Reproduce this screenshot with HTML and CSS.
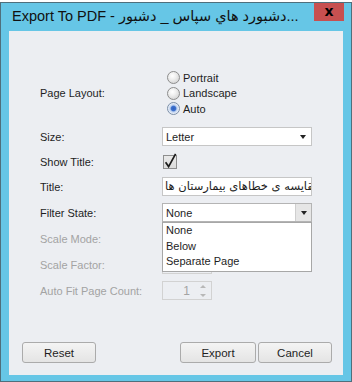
FILE: index.html
```html
<!DOCTYPE html>
<html lang="en">
<head>
    <meta charset="UTF-8">
    <meta name="viewport" content="width=device-width, initial-scale=1.0">
    <title>Export To PDF</title>
    <link rel="stylesheet" href="styles.css">
</head>
<body>
    <div class="window">
        <div class="titlebar">
            <span class="title">Export To PDF - دشبورد هاي سپاس _ دشبور...</span>
            <span class="close">x</span>
        </div>
        <div class="client">
            <div class="form">
                <div class="row row-radios">
                    <div class="label">Page Layout:</div>
                    <div class="radios">
                        <div class="radio"><span class="dot"></span>Portrait</div>
                        <div class="radio"><span class="dot"></span>Landscape</div>
                        <div class="radio"><span class="dot checked"></span>Auto</div>
                    </div>
                </div>
                <div class="row">
                    <div class="label">Size:</div>
                    <div class="combo">
                        <span class="combo-text">Letter</span>
                        <span class="arrow"></span>
                    </div>
                </div>
                <div class="row row-check">
                    <div class="label">Show Title:</div>
                    <span class="checkbox">
                        <svg width="14" height="14" viewBox="0 0 14 14"><path d="M2.6 7.2 L5.6 11.6 L12.6 -1.2" fill="none" stroke="#1b1b1b" stroke-width="1.7"/></svg>
                    </span>
                </div>
                <div class="row">
                    <div class="label">Title:</div>
                    <div class="textbox">مقایسه ی خطاهای بیمارستان ها</div>
                </div>
                <div class="row">
                    <div class="label">Filter State:</div>
                    <div class="combo combo-open">
                        <span class="combo-text">None</span>
                        <span class="dropbtn"><span class="arrow"></span></span>
                        <ul class="droplist">
                            <li>None</li>
                            <li>Below</li>
                            <li>Separate Page</li>
                        </ul>
                    </div>
                </div>
                <div class="row">
                    <div class="label disabled">Scale Mode:</div>
                    <div class="combo combo-disabled"></div>
                </div>
                <div class="row">
                    <div class="label disabled">Scale Factor:</div>
                    <div class="spin">
                        <span class="spin-value"></span>
                        <span class="spin-btns"><i class="up"></i><i class="down"></i></span>
                    </div>
                </div>
                <div class="row">
                    <div class="label disabled">Auto Fit Page Count:</div>
                    <div class="spin">
                        <span class="spin-value">1</span>
                        <span class="spin-btns"><i class="up"></i><i class="down"></i></span>
                    </div>
                </div>
            </div>
            <div class="buttons">
                <button class="btn">Reset</button>
                <button class="btn btn-export">Export</button>
                <button class="btn">Cancel</button>
            </div>
        </div>
    </div>
</body>
</html>
```
FILE: styles.css
```css
body {
    margin: 0;
    padding: 0;
    background-color: #ffffff;
    font-family: "Liberation Sans", "DejaVu Sans", sans-serif;
    font-size: 11px;
    color: #1e1e1e;
}
.window {
    margin-top: 2px;
    height: 380px;
    box-sizing: border-box;
    border: 1px solid #4f6f7c;
    background-color: #66c6e6;
    padding: 0 8px 6px 8px;
    display: flex;
    flex-direction: column;
}
.titlebar {
    height: 28px;
    display: flex;
    align-items: flex-start;
    margin-right: -1px;
}
.title {
    flex: 1;
    padding: 4px 0 0 3px;
    font-size: 14.5px;
    line-height: 18px;
    color: #111;
    white-space: nowrap;
    overflow: hidden;
}
.close {
    width: 30px;
    height: 18px;
    background-color: #c75050;
    color: #000;
    font-family: "DejaVu Sans", sans-serif;
    font-weight: bold;
    font-size: 14px;
    line-height: 16px;
    text-align: center;
}
.client {
    flex: 1;
    background-color: #eceef2;
    display: flex;
    flex-direction: column;
}
.form {
    padding: 39px 0 0 31px;
}
.row {
    display: flex;
    align-items: center;
    height: 19px;
    margin-bottom: 7px;
}
.row-radios {
    height: 46.5px;
    margin-bottom: 10.5px;
}
.row-check {
    height: 17px;
}
.label {
    width: 122px;
}
.disabled {
    color: #a3a3a3;
}
.radios {
    display: flex;
    flex-direction: column;
}
.radio {
    height: 15.5px;
    display: flex;
    align-items: center;
}
.dot {
    width: 11px;
    height: 11px;
    margin: 0 3px 0 5px;
    border: 1px solid #8d8d8d;
    border-radius: 50%;
    background: radial-gradient(circle at 40% 35%, #ffffff 0, #f0f0f0 35%, #c9c9c9 100%);
}
.dot.checked {
    border-color: #7b8ea8;
    background: radial-gradient(circle, #2f62c0 0, #3d70cc 2.2px, #bcd0ef 3.4px, #eef2f8 5.5px);
}
.combo {
    position: relative;
    width: 150px;
    height: 19px;
    box-sizing: border-box;
    border: 1px solid #c6c6c6;
    background-color: #fff;
    display: flex;
    align-items: center;
}
.combo-text {
    flex: 1;
    padding-left: 3px;
}
.arrow {
    width: 0;
    height: 0;
    margin-right: 5px;
    border-left: 3.5px solid transparent;
    border-right: 3.5px solid transparent;
    border-top: 4px solid #222;
}
.combo-open {
    border-color: #b4b4b4;
    z-index: 2;
}
.dropbtn {
    width: 16px;
    height: 17px;
    box-sizing: border-box;
    border-left: 1px solid #cfcfcf;
    background-color: #e6e6e6;
    display: flex;
    align-items: center;
    justify-content: center;
}
.dropbtn .arrow {
    margin-right: 0;
}
.droplist {
    position: absolute;
    z-index: 3;
    top: 18px;
    left: -1px;
    width: 150px;
    height: 50px;
    box-sizing: border-box;
    margin: 0;
    padding: 0;
    list-style: none;
    background-color: #fff;
    border: 1px solid #a7a7a7;
}
.droplist li {
    height: 15.5px;
    line-height: 15.5px;
    padding-left: 3px;
}
.combo-disabled {
    background-color: #eceef2;
    border-color: #d4d4d4;
}
.checkbox {
    width: 14px;
    height: 14px;
    margin-left: 1px;
    box-sizing: border-box;
    border: 1px solid #8e8e8e;
    background: linear-gradient(#e9e9e9, #dcdcdc);
}
.checkbox svg {
    display: block;
    margin: -1px;
    overflow: visible;
}
.textbox {
    width: 150px;
    height: 19px;
    box-sizing: border-box;
    border: 1px solid #c6c6c6;
    background-color: #fff;
    padding-left: 2px;
    line-height: 17px;
    white-space: nowrap;
    overflow: hidden;
    font-family: "DejaVu Sans", sans-serif;
    font-size: 11.5px;
}
.spin {
    width: 50px;
    height: 19px;
    box-sizing: border-box;
    border: 1px solid #d2d2d2;
    display: flex;
    align-items: center;
    color: #a3a3a3;
}
.spin-value {
    flex: 1;
    text-align: right;
    padding-right: 5px;
    font-size: 12px;
}
.spin-btns {
    width: 16px;
    display: flex;
    flex-direction: column;
    align-items: center;
    gap: 6px;
}
.spin-btns i {
    width: 0;
    height: 0;
    border-left: 3px solid transparent;
    border-right: 3px solid transparent;
}
.spin-btns .up {
    border-bottom: 3px solid #b8b8b8;
}
.spin-btns .down {
    border-top: 3px solid #b8b8b8;
}
.buttons {
    margin-top: auto;
    display: flex;
    gap: 2px;
    padding: 0 11px 12px 13px;
}
.btn {
    width: 74px;
    height: 21px;
    padding: 0;
    border: 1px solid #ababab;
    border-radius: 3px;
    background: linear-gradient(#f4f4f4, #e4e4e4);
    font-family: "Liberation Sans", sans-serif;
    font-size: 11.5px;
    color: #1e1e1e;
}
.btn-export {
    width: 76px;
    margin-left: auto;
}
```
